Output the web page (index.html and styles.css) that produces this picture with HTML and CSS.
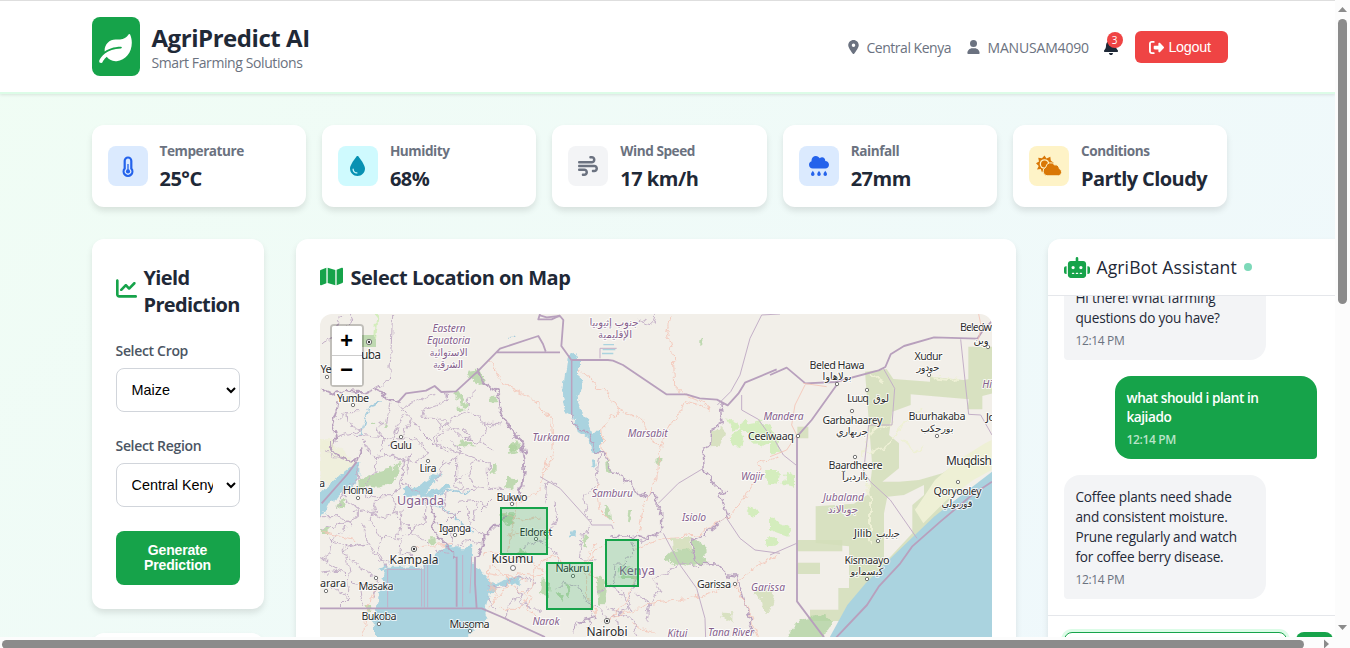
FILE: index.html
```html
<!DOCTYPE html>
<html lang="en">
<head>
<meta charset="utf-8">
<title>AgriPredict AI</title>
<link rel="stylesheet" href="styles.css">
</head>
<body>
<div class="window">
<div class="page">
  <header class="header">
    <div class="wrap header-row">
      <div class="brand">
        <div class="logo"><svg width="33" height="29" viewBox="0 0 576 512" fill="#fff"><path d="M546.200 9.700c-5.600-12.500-21.600-13-28.300-1.200C486.900 62.400 431.400 96 368 96h-80C182 96 96 182 96 288c0 7 .8 13.700 1.500 20.500C161.300 262.800 253.400 224 384 224c8.800 0 16 7.200 16 16s-7.200 16-16 16C132.600 256 26 410.100 2.400 468c-6.600 16.300 1.200 34.900 17.500 41.600 16.400 6.800 35-1.100 41.800-17.300 1.500-3.600 20.900-47.900 71.900-90.600 32.400 43.900 94 85.800 174.900 77.200C465.500 467.500 576 326.700 576 154.300c0-50.200-10.800-102.200-29.800-144.600z"/></svg></div>
        <div><h1 class="brand-name">AgriPredict AI</h1><p class="tagline">Smart Farming Solutions</p></div>
      </div>
      <div class="user-bar">
        <span class="meta place"><svg width="11" height="14" viewBox="0 0 384 512"><path fill-rule="evenodd" d="M215.700 499.200C267 435 384 279.400 384 192C384 86 298 0 192 0S0 86 0 192c0 87.400 117 243 168.300 307.200c12.300 15.300 35.100 15.300 47.400 0zM192 128a64 64 0 1 1 0 128 64 64 0 1 1 0-128z"/></svg><span>Central Kenya</span></span>
        <span class="meta account"><svg width="13" height="14" viewBox="0 0 448 512"><path d="M224 256A128 128 0 1 0 224 0a128 128 0 1 0 0 256zm-45.700 48C79.800 304 0 383.800 0 482.300C0 498.700 13.300 512 29.700 512H418.300c16.400 0 29.700-13.300 29.700-29.700C448 383.800 368.200 304 269.700 304H178.300z"/></svg><span>MANUSAM4090</span></span>
        <span class="bell"><svg width="14" height="16" viewBox="0 0 448 512" fill="#1f2937"><path d="M224 0c-17.700 0-32 14.300-32 32V51.200C119 66 64 130.600 64 208v18.800c0 47-17.300 92.400-48.500 127.600l-7.400 8.300c-8.400 9.400-10.400 22.900-5.300 34.400S19.400 416 32 416H416c12.600 0 24-7.400 29.200-18.900s3.100-25-5.300-34.400l-7.400-8.300C401.300 319.200 384 273.900 384 226.800V208c0-77.400-55-142-128-156.800V32c0-17.700-14.300-32-32-32zm45.300 493.300c12-12 18.700-28.300 18.700-45.300H160c0 17 6.700 33.300 18.700 45.300s28.300 18.700 45.300 18.700s33.300-6.700 45.300-18.700z"/></svg><b class="count">3</b></span>
        <button class="logout"><svg width="15" height="15" viewBox="0 0 512 512" fill="#fff"><path d="M377.900 105.900L500.700 228.700c7.200 7.200 11.300 17.100 11.300 27.300s-4.100 20.100-11.300 27.300L377.900 406.100c-6.400 6.400-15 9.900-24 9.900c-18.700 0-33.900-15.200-33.900-33.900l0-62.100-128 0c-17.700 0-32-14.300-32-32l0-64c0-17.700 14.300-32 32-32l128 0 0-62.100c0-18.700 15.200-33.900 33.900-33.900c9 0 17.600 3.600 24 9.900zM160 96L96 96c-17.700 0-32 14.300-32 32l0 256c0 17.700 14.300 32 32 32l64 0c17.700 0 32 14.300 32 32s-14.300 32-32 32l-64 0c-53 0-96-43-96-96L0 128C0 75 43 32 96 32l64 0c17.700 0 32 14.300 32 32s-14.300 32-32 32z"/></svg>Logout</button>
      </div>
    </div>
  </header>

  <section class="wrap weather">
    <div class="stat"><div class="tile blue"><svg width="12" height="21" viewBox="0 0 12 21"><path d="M6 1.500a3.300 3.300 0 0 0-3.300 3.300v7.700a4.400 4.400 0 1 0 6.600 0V4.800A3.300 3.300 0 0 0 6 1.500z" fill="none" stroke="#2563eb" stroke-width="2.200"/><path d="M6 8v7" stroke="#2563eb" stroke-width="1.300"/><circle cx="6" cy="15.400" r="2.100" fill="#2563eb"/></svg></div><div><p class="label">Temperature</p><p class="value">25°C</p></div></div>
    <div class="stat"><div class="tile cyan"><svg width="15" height="20" viewBox="0 0 384 512" fill="#0891b2"><path fill-rule="evenodd" d="M192 512C86 512 0 426 0 320C0 228.800 130.200 57.700 166.600 11.700C172.600 4.200 181.500 0 191.100 0h1.800c9.600 0 18.500 4.200 24.500 11.700C253.800 57.700 384 228.800 384 320c0 106-86 192-192 192zM96 336c0-8.800-7.200-16-16-16s-16 7.200-16 16c0 61.900 50.100 112 112 112c8.800 0 16-7.200 16-16s-7.200-16-16-16c-44.200 0-80-35.800-80-80z"/></svg></div><div><p class="label">Humidity</p><p class="value">68%</p></div></div>
    <div class="stat"><div class="tile gray"><svg width="20" height="20" viewBox="0 0 512 512" fill="#6b7280"><path d="M288 32c0 17.700 14.300 32 32 32h32c17.700 0 32 14.300 32 32s-14.300 32-32 32H32c-17.700 0-32 14.300-32 32s14.300 32 32 32H352c53 0 96-43 96-96s-43-96-96-96H320c-17.700 0-32 14.300-32 32zm64 352c0 17.700 14.300 32 32 32h32c53 0 96-43 96-96s-43-96-96-96H32c-17.700 0-32 14.300-32 32s14.300 32 32 32H416c17.700 0 32 14.300 32 32s-14.300 32-32 32H384c-17.700 0-32 14.300-32 32zM128 512h32c53 0 96-43 96-96s-43-96-96-96H32c-17.700 0-32 14.300-32 32s14.300 32 32 32H160c17.700 0 32 14.300 32 32s-14.300 32-32 32H128c-17.700 0-32 14.300-32 32s14.300 32 32 32z"/></svg></div><div><p class="label">Wind Speed</p><p class="value">17 km/h</p></div></div>
    <div class="stat"><div class="tile blue"><svg width="20" height="20" viewBox="0 0 512 512" fill="#2563eb"><path d="M96 320c-53 0-96-43-96-96c0-42.500 27.600-78.600 65.900-91.200C64.700 126.100 64 119.100 64 112C64 50.100 114.100 0 176 0c43.100 0 80.500 24.300 99.200 60c14.700-17.100 36.500-28 60.800-28c44.200 0 80 35.800 80 80c0 5.500-.6 10.800-1.600 16c53.600 0 97.600 43 97.600 96s-43 96-96 96H96zM98 375c20 32 44 62 44 89a46 46 0 0 1-92 0c0-27 28-57 48-89zM256 375c20 32 46 62 46 89a46 46 0 0 1-92 0c0-27 26-57 46-89zM416 375c20 32 46 62 46 89a46 46 0 0 1-92 0c0-27 26-57 46-89z"/></svg></div><div><p class="label">Rainfall</p><p class="value">27mm</p></div></div>
    <div class="stat"><div class="tile yellow"><svg width="26" height="22" viewBox="0 0 26 22"><path d="M8.500.5 10.500 3.500 14.300 1.800 14.800 5.500 17.800 8 14.500 10.500 11 16 8.300 14.500 6 17.500 4.800 14 1 14.500 2.700 11 0 8.300 3 6.500 2.200 2.700 6 3.300z" fill="#d97706"/><circle cx="8.500" cy="9" r="4.800" fill="#fef3c7"/><circle cx="8.500" cy="9" r="3.500" fill="#d97706"/><path d="M11 20.800a4.500 4.500 0 0 1-1.200-8.600 4.800 4.800 0 0 1 8.800-2.300 3.900 3.900 0 0 1 4.700 3.800A3.700 3.700 0 0 1 22.500 20.800z" fill="#d97706" stroke="#fef3c7"/></svg></div><div><p class="label">Conditions</p><p class="value wide">Partly Cloudy</p></div></div>
  </section>

  <main class="wrap board">
    <div class="side">
      <section class="panel predict">
        <h2 class="title"><svg width="21" height="21" viewBox="0 0 512 512" fill="#16a34a"><path d="M64 64c0-17.700-14.300-32-32-32S0 46.300 0 64V400c0 44.200 35.800 80 80 80H480c17.700 0 32-14.300 32-32s-14.300-32-32-32H80c-8.800 0-16-7.200-16-16V64zm406.600 86.600c12.500-12.500 12.500-32.800 0-45.300s-32.800-12.500-45.300 0L320 210.700l-57.400-57.400c-12.500-12.500-32.800-12.500-45.300 0l-112 112c-12.500 12.500-12.500 32.800 0 45.300s32.800 12.500 45.300 0L240 221.300l57.400 57.400c12.500 12.500 32.800 12.500 45.300 0l128-128z"/></svg><span>Yield Prediction</span></h2>
        <label class="field">Select Crop<select><option>Maize</option></select></label>
        <label class="field">Select Region<select><option>Central Kenya</option></select></label>
        <button class="generate">Generate Prediction</button>
      </section>
      <section class="panel next"></section>
    </div>

    <section class="panel map-panel">
      <h2 class="title"><svg width="23" height="21" viewBox="0 0 576 512" fill="#16a34a"><path d="M384 476.100L192 421.200V35.900L384 90.800V476.100zm32-1.200V88.400L543.100 37.500c15.800-6.300 32.900 5.300 32.900 22.300V394.600c0 9.800-6 18.600-15.100 22.300L416 474.800zM15.100 95.100L160 37.200V423.600L32.900 474.500C17.100 480.800 0 469.200 0 452.200V117.400c0-9.800 6-18.600 15.100-22.300z"/></svg><span>Select Location on Map</span></h2>
      <div class="map">
        <svg class="tiles" width="672" height="340" viewBox="320 314 672 340">
          <defs><filter id="rough" x="-5%" y="-5%" width="110%" height="110%" color-interpolation-filters="sRGB"><feTurbulence type="fractalNoise" baseFrequency=".045" numOctaves="3" seed="4" result="n"/><feDisplacementMap in="SourceGraphic" in2="n" scale="26" xChannelSelector="R" yChannelSelector="G"/></filter></defs>
          <rect x="320" y="314" width="672" height="340" fill="#f2efe9"/>

          <!-- west: northern Uganda and South Sudan -->
          <g transform="translate(310 250) scale(.33333)">
            <path class="green" d="M150 255h48v36h-48z"/>
            <g class="rough">
            <path class="green" d="M475 365l35-5 15 35-12 10-38-25zM432 428l12-4 30 45-8 8zM545 440h14v14h-14zM440 470h17v13h-17zM595 590l25-22 18 32h-45zM450 570l30 5 15 18-20-5-32 4zM220 515l14 8-10 12zM182 515h8v8h-8z"/>
            <path class="sand" d="M30 564h34l16 36H30z"/>
            <path class="stream" d="M215 455l-30 10-20 45-12 45M598 262h18"/>
            <path class="line" d="M92 192l-6 30-26 50-30 12M248 192l-6 130-4 70-40 22M262 460l35 40 35 42 40 40 40 18M280 495l-22 50-20 40M370 430l-60 30-38 15M335 505l5-25 60-20 14-30M372 575l15-40 50-35 40-15 65 45 30-10M80 510l30-25 38 0M155 540l-75 20M240 460l-14 60-24 8M130 555l180 15M390 500l60 60 60 20 40 20M335 505l50 0 15 40-25 40M475 485l0-40 30-30M410 540l50-5 30 40M510 580l20-60 40 0M110 485l5 40 45 15M200 530l20 40-10 30M300 500l-20 60M130 192l-20 40 20 30"/>
            <path class="road" d="M540 335l40 70 60 25 50 35 36 45 0 90"/>
            <path class="forest-line" d="M204 192l-10 80"/>
            <path class="edge" d="M205 415l25 35 33 8M205 415l-40 15-60-10-30 15-45-20M85 460l-18 60 10 40-12 40M500 360l22 42 42 22 5 60 36 58 30 30 10 45"/>
            </g>
            <path class="edge" d="M263 458l25-28 60-8 26-14 20 18 44-2 65-60 67-68 115-38 14 24 8 22M560 307h190M690 192l-5 16 40 0 25-12"/>
          </g>

          <!-- south west: lakes Albert and Victoria -->
          <g transform="translate(310 440) scale(.33333)">
            <g class="rough">
            <path class="sand" d="M30 0h34l70 70-60 60H30z"/>
            <path class="green" d="M165 110l40-15 35-5 30-28-4 28-20 40-40 10-40-5-20 15-5-20zM540 75h20v20h-18zM585 110l35 5-8 30-26-8zM595 20l20-15 10 30-22 8zM355 295h28v15h-28zM30 265h26v20H30zM80 190l30-10-10 20-25 8zM570 220l40 0 0 30-25 5zM165 495l25 0-15 22zM630 320l14 10-8 20-12-6z"/>
            <path class="water" d="M135 70l16 0 0 40-20 25-68 50-22 40-31 0 0-50 80-70zM280 145l50-10 50-35 15 3-30 28-15 25 65-20 8 6-60 28-40 0-40 0zM200 385l28-10-6 14zM228 380l110 0 40-40 30-30 24 15 25 0 30-10-2 50 30 30 25 30 15 5 60-20 25 0-15 20-60 5-30 35-10 40 5 25-15 10-45 50-10 60H195l0-100-10-20 20-50z"/>
            <path class="stream" d="M370 195l35 10 35 30 45 45M370 165l50-15 60 10"/>
            <path class="line" d="M45 30l30 20 35 10M140 65l10 55-35 15-20 35 50 35 0 25-60 25-50 10M200 50l-5 45-25 30 0 45 80 0 20-30 15-80M245 45l35 20-5 55 60 50M250 170l10 60 65 60 35 25M350 170l-5 75-70 45-5 45 35 10M120 215l40-5 60 20 55-15M110 260l-40 30-20 80 50 30M155 250l20 60 35 50 40 10M175 310l-80 20M120 350l30 35 55 25-15 60M385 20l70 20 80 30 0 75-75 5M440 50l0 70 20 20M400 60l-20 60M455 110l-20 15 5 20 20-5M540 145l60 0M560 160l-50 50M380 250l40 20 10 45M470 200l15 60 45 30M375 330l40 10M100 320l20 70-5 80-30 30M530 440l45 0 40-30 60 10-15 30-70 50 0 45M530 470l30 40M620 440l15 45 60 30M700 300l-60 20M745 130l-35 0-5 60M160 0l30 50 55-5 60 25 50-30-40-50M300 40l-10 60M425 0l30 40-70 50M490 60l-20 50 30 35M410 150l-10 60 40 20M440 190l60-10 30 20M500 180l-10 60M205 175l-25 65 30 50 60 10M30 230l60 0 40 25M220 290l-15 50 20 40M60 300l60 20 60-10M30 400l60-10 40 40 70 10M30 350l25 10M60 440l50 30M150 430l10 70M450 210l-40 40M520 310l-50-10-30 20M280 215l-20 80M110 145l-30 60"/>
            <path class="road" d="M30 275l110 25M310 325l120-15M520 340l50 0 30 20 40-5 70 45M535 450l60-15 55 30-15 40-60 0M620 190l-15 70-10 80M710 50l-20 100-60 40M540 370l60 55-60 80M680 380l-30 130 60 40M160 590l10-70 30-90M530 400l120 20M580 220l60 20 60-10M590 290l70-20 50 30M560 340l-30 60 30 70M610 400l90 10"/>
            <path class="edge" d="M515 325l-20 30M515 325l10-35 65-65M60 30l0-30M365 190l10 45-10 30 40 45 35 40M633 0l10 80-6 60-30 50M60 30l50 30 30 5 20-50"/>
            </g>
            <path class="line" d="M233 390v112M230 388h105v112M343 375v127M353 370v132M458 345v155M485 350l-5 110"/>
            <path class="edge" d="M30 505h485l60 26 130 60M495 350l0 80 5 75M440 350v150M140 65l-30 40-75 85"/>
          </g>

          <!-- centre: Kenya -->
          <g transform="translate(540 310) scale(.33333)">
            <g class="rough">
            <path class="water" d="M80 140l25-15 12 20 0 45 6 40-10 30 8 50 20 20 12 35 30 0 0 60-20 5-12-5-5-40-40-30 2-30-32-20-10-50 5-55zM92 665l15-5 0 20-15 5zM157 455l8-4 2 20-9 4z"/>
            <path class="sand2" d="M515 362l30-8 12 18-20 38-26 2zM395 684l60 0-2 34-55 0zM640 850l30-15 35 5-15 65-20 0-5-40zM548 908l32 2 0 26-36-12z"/>
            <path class="lime" d="M562 328l30 6 8 20-25 5zM602 340l20-8 10 30-28 2zM570 365l30-5 16 20-22 38-18-10zM625 340l40-8 35 20 5 40-50 18-25-20zM620 600l18-8 18 14-14 14zM672 480l25 0 20 10-5 35-30-5zM684 682l26 0 8 20-32 4z"/>
            <path class="green" d="M196 455l12-10 5 40-15 0zM400 720l55-5 5-28 36 25 2 45-60 12-72-20zM190 585l20 10 3 40-10-5zM268 600l12 0-8 34-8-2zM475 85l12-4 0 20-12 4zM130 680l12 0-2 30-10 0zM165 800l20 0 15 40-5 40-18 10zM250 755l30 15 10 40-40 0-20-20zM350 440l15 5-4 20-12-5zM50 850l25 0-8 30zM75 820l20 15-10 30zM5 800l25 20-5 40-25-10z"/>
            <path class="line" d="M180 435l-5 25-5 70-40 25 10 60 10 15M350 15l-10 28-50-15M45 570l5 60-30 60M155 645l-30 40-10 60 55 5M275 692l10 30-35 40-25 0-5 70M295 700l75-35M300 770l-30 90-10 40-60 30M370 790l-30 20 20 30-30 50M370 790l55-30 50 10M170 850l30-25 35 10 35 65M130 870l40 20 35 40M50 840l20-20 40 10 40 50M320 940l10-60-40-30M200 890l80 40 10 50M0 690l40 30 20 50M160 900l-20 60M230 930l20 50"/>
            <path class="edge2" d="M540 285l6 55-30 20-5 45-22 10 4 70 30 35 35 30-20 5 25 65-65 50-40 20 4 60 15 10 50 2 35 35 30 5 50 170M100 970l10-30 60-20"/>
            <path class="edge2" d="M95 315l13 35 40 20 18 58 25 0 24 58 50 25 36 48 40-10 12 15-2 25 14 22v50l-40 25-40-10-70 5"/>
            <path class="road" d="M390 15l-10 50 20 70 4 90 30 30 70 30 4 20M510 295l-75-20-60 100-15 55-10 80-35 60-20 100M117 180l35 25 25 30 25 5 30 60 60 25 20 10 25 60 33 20M235 300l-50 60 5 60 20 30M170 520l10 80 40 40M0 295l35 40 5 100-30 60M290 715l80-30 100-10 90-50 50-55 40-65 10-45 60-20M585 820l60-50 70-35M585 820l35 70 35 90M585 820l-100 40-150 20-150 55M170 920l-30-70 0-90 50-60M205 935l60-70 25-90M340 970l-70-30M0 760l40-20 30 20M170 700l-40 60 40 50"/>
            </g>
            <path class="water" d="M188 117h38v4h-38zM186 128h34v5h-34zM190 102h32v4h-32z"/>
            <path class="line" d="M600 195l30-110 35-70 55-3M600 195l-28 50-40 40M605 255v45l50 28 65 90M490 475l-75 45-60 60M370 670l50 95 50 70 25 90 3 90M560 625l40 60 45 35 75 10M60 535l90 100 5 10 60 0 5 12M60 535l-60-35M180 145v-30h50"/>
            <path class="edge" d="M0 16l20 6 40-4 10 12-6 78 30 42 110 0 15 2 30 13 130 88 60 0 40 12 52 4 32 17 32-35 20-33 95-40"/>
            <path class="edge2" d="M95 150v165"/>
          </g>

          <!-- east: Somalia and the Indian Ocean -->
          <g transform="translate(770 310) scale(.33333)">
            <path class="sand2" d="M285 185l65-8 20 30 110 8 0-15 100 10 15-2 0-98 72 0v140l-30 8 0 40-45 0 5-30-175-15 0 32-55 20-10 70 30 25 0 75-50 40 50 0 60-5 70-20 70-45 75 0 0 30-60 30-55 50-50 80-130 120-10-10 70-75 0-85 35-30 0-30 30 0-30 0-60 30-50 5-10 50 0 70 0 80 30 60-20 80-130 195-32 0 0-72 35 0 0-60 30 0 0-30-50 0-85 0 0-34 85 0 0-65 32 0 0-125-100-10 0-110 115-8 45-30 10-80z"/>
            <path class="sand2" d="M82 690h135v34H82zM82 758h68v34H82zM82 350h33v35H82z"/>
            <path class="cream" d="M435 600l60-90 70-60 80-50 20-10 0 90-55 30-80 60-70 70z"/>
            <g class="rough">
            <path class="lime" d="M-10 480l30 0 5 40-25 0zM50 485l25 10 0 35-35-5zM0 620l60 40-5 20-55-20zM0 370l20 10 10 50-30 0z"/>
            <path class="green" d="M65 960l30-35 70-10 25 20-40 60H50z"/>
            <path class="forest-line pale" d="M280 480l20 80 0 140M275 440l30-80 60-20M440 600l70-60M470 200l100 10M300 190l40 30M290 430l60-20 60-80 40-30M400 390l40 40 20-20"/>
            </g>
            <path class="water" d="M166 1020l14-40 52-95 55-65 85-85 120-115 90-70 84-65v535z"/>
            <path class="line" d="M340 175l34 60-8 110-70 0-15 140 20 30 60 55 80 115M572 88l24 225 36 2 34 60M0 365l40 70 38 30M0 735l80-35"/>
            <path class="edge" d="M0 195l50-22 56 47 90-4 130-35 20-10 16-38 40-25 90-26 130 4 15-22 28-30M200 225l-75 105-44 50v494l90 120M666 515l-60 40-95 80-85 75-35 50-65 70-35 55-90 95-30 40"/>
            <path class="road" d="M105 225l-30 60-10 60 15 30M0 440l50-20 30-45M626 12l8 40-10 40M170 230l-70-10"/>
          </g>

          <!-- town markers -->
          <g class="dots"><circle cx="369" cy="342" r="2.700"/><circle cx="414" cy="549" r="2.700"/><circle cx="607" cy="621" r="2.700"/><circle cx="327" cy="377" r="1.700"/><circle cx="353" cy="405" r="1.700"/><circle cx="401" cy="437" r="1.700"/><circle cx="428" cy="461" r="1.700"/><circle cx="358" cy="498" r="1.700"/><circle cx="512" cy="504" r="1.700"/><circle cx="455" cy="535" r="1.700"/><circle cx="536" cy="539" r="1.700"/><circle cx="513" cy="568" r="2.500"/><circle cx="376" cy="578" r="1.700"/><circle cx="326" cy="591" r="1.700"/><circle cx="379" cy="624" r="1.700"/><circle cx="470" cy="631" r="1.700"/><circle cx="573" cy="576" r="1.700"/><circle cx="735" cy="584" r="1.700"/><circle cx="837" cy="384" r="1.700"/><circle cx="867" cy="390" r="1.700"/><circle cx="852" cy="411" r="1.700"/><circle cx="798" cy="436" r="1.700"/><circle cx="929" cy="375" r="1.700"/><circle cx="988" cy="347" r="1.700"/><circle cx="937" cy="436" r="1.700"/><circle cx="855" cy="457" r="1.700"/><circle cx="958" cy="482" r="1.700"/><circle cx="878" cy="541" r="1.700"/><circle cx="867" cy="579" r="1.700"/></g>
          <g fill="#333"><circle cx="369" cy="342" r="1.200"/><circle cx="414" cy="549" r="1.200"/><circle cx="607" cy="621" r="1.200"/></g>

          <g class="town">
            <text x="371" y="359" font-size="12" textLength="20">uba</text><text x="326" y="373" textLength="11">Ye</text><text x="353" y="401.500" textLength="32">Yumbe</text><text x="401" y="449" textLength="22">Gulu</text><text x="428" y="472" textLength="17">Lira</text><text x="322" y="487">a</text><text x="358" y="494" textLength="30">Hoima</text><text x="512" y="500.500" textLength="31">Bukwo</text><text x="455" y="531.500" textLength="32">Iganga</text><text x="536" y="535.500" textLength="33">Eldoret</text><text x="512.500" y="562.500" font-size="12" textLength="42">Kisumu</text><text x="414" y="563.500" font-size="12" textLength="49">Kampala</text><text x="376" y="589.500" textLength="35">Masaka</text><text x="333" y="587" textLength="26">arara</text><text x="379" y="620" textLength="35">Bukoba</text><text x="469.500" y="627.500" textLength="40">Musoma</text><text x="572.500" y="572" textLength="34">Nakuru</text><text x="607" y="636" font-size="12" textLength="41">Nairobi</text><text x="714" y="587.500" textLength="34">Garissa</text><text class="from" x="960" y="331" textLength="32">Beledw</text><text x="981" y="344" font-size="10">وين</text><text x="928.500" y="359.500" textLength="28">Xudur</text><text x="928" y="371" font-size="10" textLength="23">حودور</text><text x="837" y="368.500" textLength="55">Beled Hawa</text><text x="837" y="380" font-size="10" textLength="29">بولاهاوا</text><text x="858" y="402" textLength="22">Luuq</text><text x="881" y="402" font-size="10">لوق</text><text x="852.500" y="423.500" textLength="60">Garbahaarey</text><text x="852" y="435" font-size="10" textLength="32">جربهاري</text><text x="771" y="440" textLength="46">Ceelwaaq</text><text x="937" y="420" textLength="57">Buurhakaba</text><text x="937" y="432" font-size="10" textLength="33">بورحكب</text><text class="from" x="946" y="464.500" font-size="12" textLength="46">Muqdish</text><text x="855.500" y="468.500" textLength="54">Baardheere</text><text x="855" y="480" font-size="10" textLength="26">باارديرآ</text><text x="957.500" y="495" textLength="48">Qoryooley</text><text x="957" y="507" font-size="10" textLength="31">قوريولي</text><text x="863" y="537" textLength="18">Jilib</text><text x="888" y="537" font-size="10" textLength="24">جيليب</text><text x="867" y="563.500" textLength="45">Kismaayo</text><text x="867" y="575" font-size="10" textLength="33">كيسمايو</text><text class="from" x="986" y="421" textLength="9">Jo</text>
          </g>
          <g class="region">
            <text x="449" y="332" textLength="33">Eastern</text><text x="448.600" y="344" textLength="43">Equatoria</text><text class="up" x="448.600" y="356" textLength="38">الاستوائية</text><text class="up" x="448" y="368" textLength="30">الشرقية</text><text class="up" x="614" y="326" textLength="49">جنوب إثيوبيا</text><text class="up" x="615" y="338" textLength="34">الإقليمية</text><text x="551" y="441" textLength="37">Turkana</text><text x="647.700" y="437" textLength="40">Marsabit</text><text x="612.500" y="497" textLength="41">Samburu</text><text x="694" y="521" textLength="24">Isiolo</text><text x="752.500" y="479.500" textLength="23">Wajir</text><text x="783.500" y="420" textLength="40">Mandera</text><text x="768" y="591" textLength="34">Garissa</text><text x="546" y="625" textLength="27">Narok</text><text x="677.500" y="636.500" textLength="20">Kitui</text><text x="731" y="636" textLength="46">Tana River</text><text x="843.500" y="500.500" textLength="41">Jubaland</text><text class="up" x="843" y="513" textLength="30">جوبالاند</text><text x="987" y="388">Hi</text><text class="up big" x="420.500" y="505" textLength="47">Uganda</text><text class="up big" x="637" y="575" textLength="36">Kenya</text>
          </g>
          <g fill="#16a34a" fill-opacity=".2" stroke="#16a34a" stroke-width="2"><rect x="501" y="508" width="46" height="46"/><rect x="547" y="563" width="45" height="46"/><rect x="606" y="540" width="32" height="46"/></g>
        </svg>
        <div class="zoom"><button>+</button><button>−</button></div>
      </div>
    </section>

    <section class="chat">
      <div class="chat-head"><svg width="26" height="21" viewBox="0 0 640 512" fill="#16a34a"><path fill-rule="evenodd" d="M320 0c17.700 0 32 14.300 32 32V96H472c39.800 0 72 32.200 72 72V440c0 39.800-32.200 72-72 72H168c-39.800 0-72-32.200-72-72V168c0-39.800 32.200-72 72-72H288V32c0-17.700 14.300-32 32-32zM208 384c-8.800 0-16 7.200-16 16s7.200 16 16 16h32c8.800 0 16-7.200 16-16s-7.200-16-16-16H208zm96 0c-8.800 0-16 7.200-16 16s7.200 16 16 16h32c8.800 0 16-7.200 16-16s-7.200-16-16-16H304zm96 0c-8.800 0-16 7.200-16 16s7.200 16 16 16h32c8.800 0 16-7.200 16-16s-7.200-16-16-16H400zM264 256a40 40 0 1 0 -80 0 40 40 0 1 0 80 0zm152 40a40 40 0 1 0 0-80 40 40 0 1 0 0 80zM48 224H64V416H48c-26.500 0-48-21.500-48-48V272c0-26.500 21.500-48 48-48zm544 0c26.500 0 48 21.500 48 48v96c0 26.500-21.500 48-48 48H576V224h16z"/></svg><span>AgriBot Assistant</span><i class="online"></i></div>
      <div class="log">
        <div class="msg bot"><p>Hi there! What farming<br>questions do you have?</p><time>12:14 PM</time></div>
        <div class="msg me"><p>what should i plant in<br>kajiado</p><time>12:14 PM</time></div>
        <div class="msg bot"><p>Coffee plants need shade<br>and consistent moisture.<br>Prune regularly and watch<br>for coffee berry disease.</p><time>12:14 PM</time></div>
      </div>
      <div class="compose"><input type="text" aria-label="Message"><button class="send" aria-label="Send"></button></div>
    </section>
  </main>
</div>
<div class="vbar"><svg width="15" height="18" viewBox="0 0 15 18"><path d="M3 12l4.500-5 4.500 5z" fill="#8b8b8b"/></svg><i class="vthumb"></i><svg class="down" width="15" height="14" viewBox="0 0 15 14"><path d="M3 2h9l-4.500 5z" fill="#8b8b8b"/></svg></div>
<div class="hbar"><i class="hthumb"></i><svg width="10" height="11" viewBox="0 0 10 11"><path d="M2 2.500l5 4.500-5 4.500z" fill="#8b8b8b"/></svg></div>
</div>
</body>
</html>
```
FILE: styles.css
```css
* { box-sizing: border-box; }
body, h1, h2, p { margin: 0; }
body { font-family: "Open Sans", "Noto Sans", sans-serif; color: #1f2937; overflow: hidden; }
svg { display: block; flex: none; }

.window { width: 1350px; height: 648px; display: grid; grid-template-columns: 1335px 15px; grid-template-rows: 637px 11px; overflow: hidden; background: #fcfcfc; }
.page { overflow: hidden; background: linear-gradient(135deg, #f0fdf4 0%, #eff6ff 100%) 0 0 / 1335px 1200px; border-top: 1px solid #dedede; }
.wrap { width: 1136px; margin-left: 91.500px; }

.header { height: 93px; background: #fff; border-bottom: 2px solid #dcfce7; box-shadow: 0 1px 3px rgba(0, 0, 0, .1); }
.header-row { height: 91px; display: flex; justify-content: space-between; align-items: center; }
.brand { display: flex; align-items: center; gap: 12px; }
.logo { width: 48px; height: 59px; border-radius: 8px; background: #16a34a; display: grid; place-items: center; padding-top: 3px; }
.brand-name { font-size: 24px; line-height: 30px; letter-spacing: -.45px; margin-top: 3px; }
.tagline { font-size: 14px; line-height: 20px; color: #6b7280; letter-spacing: -.4px; }
.user-bar { display: flex; align-items: center; margin-top: 1px; }
.meta { display: flex; align-items: center; font-size: 14px; color: #6b7280; fill: #6b7280; white-space: nowrap; }
.place { width: 119px; gap: 8px; letter-spacing: -.48px; }
.account { width: 137px; gap: 8px; letter-spacing: -.18px; }
.bell { position: relative; width: 31px; }
.count { position: absolute; left: 3px; top: -7px; width: 16px; height: 16px; border-radius: 50%; background: #ef4444; color: #fff; font-size: 10px; font-weight: 400; line-height: 16px; text-align: center; }
.logout { width: 93px; height: 32px; border: 0; border-radius: 6px; background: #ef4444; color: #fff; font: 14.400px "Liberation Sans", Arial, sans-serif; display: flex; align-items: center; justify-content: center; gap: 4px; letter-spacing: -.3px; padding: 0 2px 0 0; }

.weather { display: grid; grid-template-columns: repeat(5, 1fr); gap: 16px; padding-top: 31px; }
.stat { height: 82px; padding: 16px; border-radius: 12px; background: #fff; box-shadow: 0 4px 6px rgba(0, 0, 0, .1); display: flex; align-items: center; gap: 12px; }
.tile { width: 40px; height: 40px; border-radius: 8px; display: grid; place-items: center; flex: none; }
.blue { background: #dbeafe; }
.cyan { background: #cffafe; }
.gray { background: #f3f4f6; }
.yellow { background: #fef3c7; }
.label { font-size: 13.600px; line-height: 20px; font-weight: 700; color: #6b7280; letter-spacing: -.45px; }
.value { font-size: 20px; line-height: 27px; margin-top: 4px; font-weight: 700; letter-spacing: -.5px; white-space: nowrap; }
.wide { letter-spacing: -.58px; }

.board { display: grid; grid-template-columns: 172px 720px 320px; gap: 32px; margin-top: 32px; }
.panel { background: #fff; border-radius: 12px; box-shadow: 0 4px 6px rgba(0, 0, 0, .1); padding: 24px; }
.side { display: flex; flex-direction: column; gap: 24px; }
.predict { height: 370px; }
.next { height: 120px; }
.title { display: flex; align-items: center; gap: 8px; font-size: 20px; line-height: 27px; letter-spacing: -.5px; }
.predict .title { margin: 1px -4px 23px 0; gap: 7px; letter-spacing: -.65px; }
.predict .title svg { margin-bottom: 5px; }
.field { display: block; font-size: 14px; line-height: 20px; font-weight: 600; color: #4b5563; margin-bottom: 24px; letter-spacing: -.32px; }
.field select { display: block; width: 124px; height: 44px; margin-top: 7px; padding: 0 10px 0 11px; border: 1px solid #d1d5db; border-radius: 8px; background: #fff; color: #000; font: 14.400px "Liberation Sans", Arial, sans-serif; background-position: right; }
.generate { width: 124px; height: 54px; border: 0; border-radius: 8px; background: #16a34a; color: #fff; font: 700 14px/15px "Liberation Sans", Arial, sans-serif; padding: 0 20px; letter-spacing: -.15px; }

.map-panel { height: 520px; }
.map-panel .title { margin: 1px 0 23px; }
.map-panel .title svg { margin-bottom: 2px; }
.map { position: relative; height: 340px; border-radius: 12px 12px 0 0; overflow: hidden; }
.zoom { position: absolute; left: 10px; top: 10px; width: 34px; border: 2px solid rgba(0, 0, 0, .2); border-radius: 4px; background-clip: padding-box; }
.zoom button { display: block; width: 30px; height: 29px; padding: 2px 0 0; border: 0; background: #fff; color: #000; font: bold 22px/28px "Liberation Mono", monospace; }
.zoom button:first-child { height: 30px; padding-top: 3px; border-bottom: 1px solid #ccc; border-radius: 2px 2px 0 0; }
.rough { filter: url(#rough); }
.water { fill: #aad3df; }
.green { fill: #add19e; fill-opacity: .75; }
.sand { fill: #eef0d5; fill-opacity: .7; }
.sand2 { fill: #d3deba; fill-opacity: .85; }
.cream { fill: #eef0d5; }
.lime { fill: #d4edbd; }
.line, .edge, .edge2, .road, .stream, .forest-line { fill: none; stroke-linejoin: round; }
.line { stroke: #c3afc7; stroke-width: 3; }
.edge { stroke: #b8a0bd; stroke-width: 5.500; }
.edge2 { stroke: #b9a2bf; stroke-width: 4.500; }
.road { stroke: #f4c3b4; stroke-width: 2.500; }
.stream { stroke: #a3cbdc; stroke-width: 4; }
.forest-line { stroke: #d4edbd; stroke-width: 6; }
.pale { stroke: #eef0d5; }
.dots { fill: #fff; stroke: #555; stroke-width: .8; }
.town, .region { font-family: "Noto Sans", "DejaVu Sans", sans-serif; font-size: 10.800px; text-anchor: middle; paint-order: stroke; stroke: #fff; stroke-opacity: .75; stroke-width: 2px; stroke-linejoin: round; }
.town { fill: #2c2c2c; }
.from { text-anchor: start; }
.region { fill: #85608c; font-style: italic; font-size: 10.300px; }
.up { font-style: normal; }
.big { font-size: 12.500px; }

.chat { height: 520px; background: #fff; border-radius: 12px; box-shadow: 0 4px 6px rgba(0, 0, 0, .1); display: flex; flex-direction: column; }
.chat-head { height: 57px; flex: none; border-bottom: 1px solid #e5e7eb; display: flex; align-items: center; gap: 7px; padding-left: 16px; font-size: 17.600px; font-weight: 500; letter-spacing: .08px; }
.online { width: 8px; height: 8px; border-radius: 50%; background: #7dd9b9; }
.log { height: 319px; flex: none; overflow: hidden; padding: 0 51px 16px 16px; display: flex; flex-direction: column; justify-content: flex-end; gap: 16px; }
.msg { width: 202px; flex: none; padding: 12px 12px 10px; border-radius: 16px; font-size: 13.600px; line-height: 19.900px; letter-spacing: -.2px; white-space: nowrap; }
.msg time { display: block; font-size: 12px; line-height: 18px; margin-top: 4px; letter-spacing: -.35px; color: #6b7280; }
.bot { background: #f3f4f6; border-bottom-left-radius: 4px; }
.me { background: #16a34a; color: #fff; font-weight: 600; letter-spacing: -.45px; margin-left: 51px; border-bottom-right-radius: 4px; }
.msg.me time { color: #b9e3c8; }
.compose { border-top: 1px solid #e5e7eb; padding: 16px; display: flex; gap: 9px; }
.compose input { width: 223px; height: 40px; border: 1px solid #16a34a; border-radius: 8px; box-shadow: 0 0 0 3px #dcfce7; background: #fff; }
.send { width: 37px; height: 40px; border: 0; border-radius: 8px; background: #16a34a; }

.vbar { display: flex; flex-direction: column; align-items: center; }
.vthumb { width: 9px; height: 285px; margin-top: 1px; border-radius: 5px; background: #8b8b8b; }
.down { margin-top: auto; }
.hbar { grid-column: 1 / 3; display: flex; padding-left: 2px; }
.hthumb { width: 1302px; height: 9px; margin: 3px 18px 0 0; border-radius: 5px; background: #8b8b8b; }
```
